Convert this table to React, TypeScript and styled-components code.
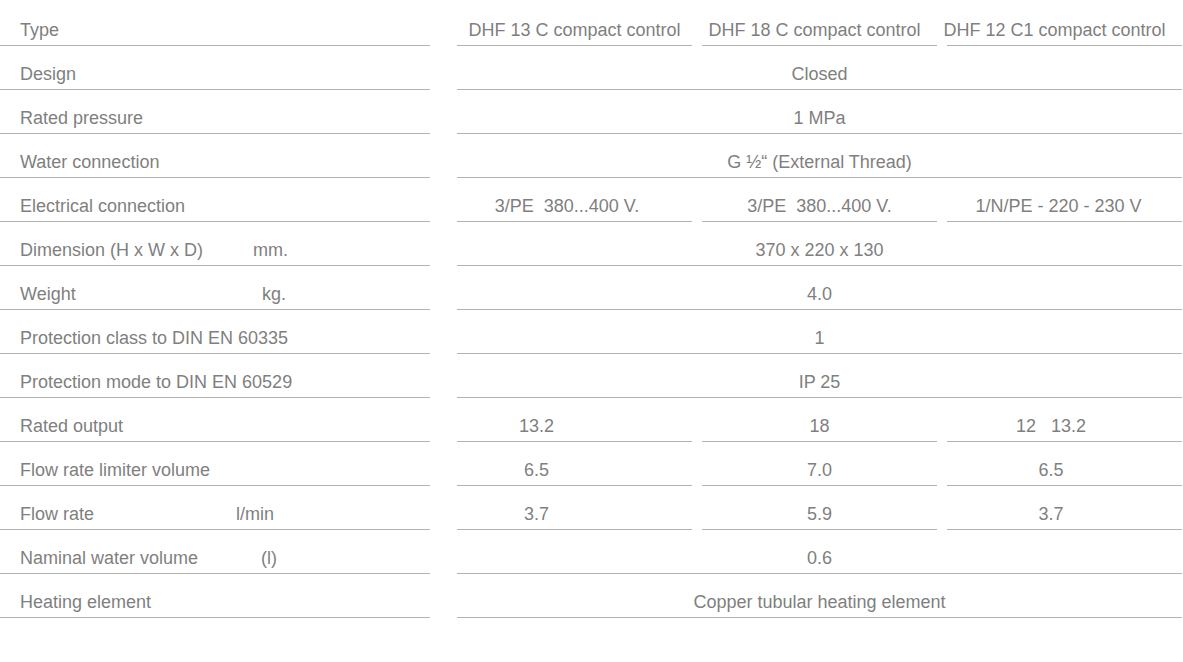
import * as React from 'react';
import styled, { createGlobalStyle } from 'styled-components';

const GlobalStyle = createGlobalStyle`
  html, body {
    margin: 0;
    padding: 0;
    background: #ffffff;
  }
  body {
    font-family: "Liberation Sans", Arial, sans-serif;
    color: #7f7f7f;
  }
`;

const Table = styled.div`
  width: 1183px;
  padding-top: 2px;
  box-sizing: border-box;
`;

const Row = styled.div`
  display: grid;
  grid-template-columns: 430px 725px;
  column-gap: 27px;
  height: 44px;
`;

const Label = styled.div`
  display: flex;
  align-items: flex-end;
  box-sizing: border-box;
  height: 44px;
  padding: 0 0 5px 20px;
  border-bottom: 1px solid #b2b2b2;
  font-size: 18px;
  line-height: 20px;
  white-space: nowrap;
`;

const Name = styled.span<{ $w?: number }>`
  display: inline-block;
  width: ${p => (p.$w ? `${p.$w}px` : 'auto')};
`;

const Unit = styled.span``;

const Values = styled.div`
  display: grid;
  grid-template-columns: repeat(3, 235px);
  column-gap: 10px;
`;

const Cell = styled.div<{ $span?: boolean; $shift?: number }>`
  grid-column: ${p => (p.$span ? '1 / -1' : 'auto')};
  display: flex;
  align-items: flex-end;
  justify-content: center;
  box-sizing: border-box;
  height: 44px;
  padding: 0 ${p => p.$shift || 0}px 5px 0;
  border-bottom: 1px solid #b2b2b2;
  font-size: 18px;
  line-height: 20px;
  white-space: pre;
`;

type Value = { text: string; shift?: number };

type Spec = {
  label: string;
  unit?: string;
  unitAt?: number;
  span?: string;
  values?: Value[];
};

const rows: Spec[] = [
  {
    label: 'Type',
    values: [
      { text: 'DHF 13 C compact control' },
      { text: 'DHF 18 C compact control', shift: 10 },
      { text: 'DHF 12 C1 compact control', shift: 20 },
    ],
  },
  { label: 'Design', span: 'Closed' },
  { label: 'Rated pressure', span: '1 MPa' },
  { label: 'Water connection', span: 'G \u00bd\u201c (External Thread)' },
  {
    label: 'Electrical connection',
    values: [
      { text: '3/PE  380...400 V.', shift: 15 },
      { text: '3/PE  380...400 V.' },
      { text: '1/N/PE - 220 - 230 V', shift: 12 },
    ],
  },
  { label: 'Dimension (H x W x D)', unit: 'mm.', unitAt: 253, span: '370 x 220 x 130' },
  { label: 'Weight', unit: 'kg.', unitAt: 262, span: '4.0' },
  { label: 'Protection class to DIN EN 60335', span: '1' },
  { label: 'Protection mode to DIN EN 60529', span: 'IP 25' },
  {
    label: 'Rated output',
    values: [
      { text: '13.2', shift: 76 },
      { text: '18' },
      { text: '12   13.2', shift: 27 },
    ],
  },
  {
    label: 'Flow rate limiter volume',
    values: [
      { text: '6.5', shift: 76 },
      { text: '7.0' },
      { text: '6.5', shift: 27 },
    ],
  },
  {
    label: 'Flow rate',
    unit: 'l/min',
    unitAt: 236,
    values: [
      { text: '3.7', shift: 76 },
      { text: '5.9' },
      { text: '3.7', shift: 27 },
    ],
  },
  { label: 'Naminal water volume', unit: '(l)', unitAt: 261, span: '0.6' },
  { label: 'Heating element', span: 'Copper tubular heating element' },
];

export default function App() {
  return (
    <>
      <GlobalStyle />
      <Table>
        {rows.map(row => (
          <Row key={row.label}>
            <Label>
              <Name $w={row.unitAt ? row.unitAt - 20 : undefined}>{row.label}</Name>
              {row.unit ? <Unit>{row.unit}</Unit> : null}
            </Label>
            <Values>
              {row.span ? (
                <Cell $span>{row.span}</Cell>
              ) : (
                row.values!.map((v, i) => (
                  <Cell key={i} $shift={v.shift}>
                    {v.text}
                  </Cell>
                ))
              )}
            </Values>
          </Row>
        ))}
      </Table>
    </>
  );
}
